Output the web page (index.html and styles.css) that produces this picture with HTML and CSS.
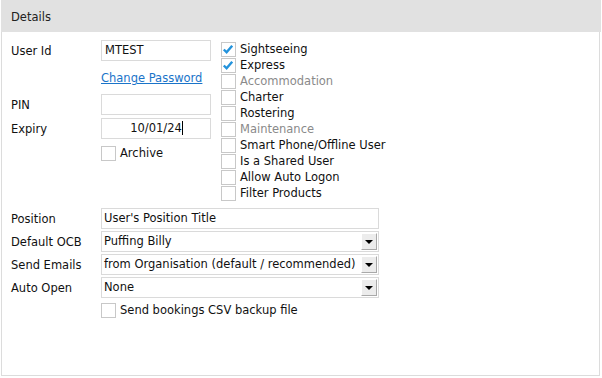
FILE: index.html
```html
<!DOCTYPE html>
<html lang="en">
<head>
  <meta charset="UTF-8" />
  <title>User Details</title>
  <link rel="stylesheet" href="styles.css">
</head>
<body>

  <div class="panel">
    <div class="panel-head">Details</div>

    <div class="panel-body">
      <div class="top">
        <div class="form-left">
          <div class="field">
            <span class="lbl">User Id</span>
            <div class="box">MTEST</div>
          </div>
          <div class="field link-row">
            <span class="lbl"></span>
            <a href="#" class="link">Change Password</a>
          </div>
          <div class="field pin-row">
            <span class="lbl">PIN</span>
            <div class="box"></div>
          </div>
          <div class="field expiry-row">
            <span class="lbl">Expiry</span>
            <div class="box box-center">10/01/24<span class="caret"></span></div>
          </div>
          <div class="field archive-row">
            <span class="lbl"></span>
            <label class="check"><span class="cb"></span>Archive</label>
          </div>
        </div>

        <div class="checks">
          <label class="check"><span class="cb"><svg viewBox="0 0 15 15" width="15" height="15"><path d="M3 7.5 L6 10.5 L12 3.5" fill="none" stroke="#2393dc" stroke-width="2.6"/></svg></span>Sightseeing</label>
          <label class="check"><span class="cb"><svg viewBox="0 0 15 15" width="15" height="15"><path d="M3 7.5 L6 10.5 L12 3.5" fill="none" stroke="#2393dc" stroke-width="2.6"/></svg></span>Express</label>
          <label class="check disabled"><span class="cb"></span>Accommodation</label>
          <label class="check"><span class="cb"></span>Charter</label>
          <label class="check"><span class="cb"></span>Rostering</label>
          <label class="check disabled"><span class="cb"></span>Maintenance</label>
          <label class="check"><span class="cb"></span>Smart Phone/Offline User</label>
          <label class="check"><span class="cb"></span>Is a Shared User</label>
          <label class="check"><span class="cb"></span>Allow Auto Logon</label>
          <label class="check"><span class="cb"></span>Filter Products</label>
        </div>
      </div>

      <div class="rows">
        <div class="field">
          <span class="lbl">Position</span>
          <div class="box wide">User's Position Title</div>
        </div>
        <div class="field">
          <span class="lbl">Default OCB</span>
          <div class="box wide select">Puffing Billy<span class="drop"></span></div>
        </div>
        <div class="field">
          <span class="lbl">Send Emails</span>
          <div class="box wide select">from Organisation (default / recommended)<span class="drop"></span></div>
        </div>
        <div class="field">
          <span class="lbl">Auto Open</span>
          <div class="box wide select">None<span class="drop"></span></div>
        </div>
        <div class="field csv-row">
          <span class="lbl"></span>
          <label class="check"><span class="cb"></span>Send bookings CSV backup file</label>
        </div>
      </div>
    </div>
  </div>

</body>
</html>
```

FILE: styles.css
```css
* {
  box-sizing: border-box;
  margin: 0;
  padding: 0;
}

body {
  font-family: 'DejaVu Sans', Verdana, sans-serif;
  font-size: 11.5px;
  color: #111;
  background: #fff;
}

.panel {
  margin-left: 1px;
  width: 599px;
  height: 376px;
  border: 1px solid #dcdcdc;
  border-top: none;
}

.panel-head {
  height: 32px;
  background-color: #e1e1e1;
  padding-left: 10px;
  line-height: 35px;
  color: #222;
  margin-left: -1px;
  margin-right: -2px;
}

.panel-body {
  padding: 8px 9px;
}

.top {
  display: flex;
  gap: 10px;
}

.form-left {
  width: 200px;
  display: flex;
  flex-direction: column;
}

.field {
  display: flex;
  align-items: center;
}

.lbl {
  width: 90px;
  flex-shrink: 0;
}

.box {
  position: relative;
  width: 110px;
  height: 21px;
  border: 1px solid #dadada;
  padding: 0 3px;
  line-height: 19px;
  white-space: nowrap;
  overflow: hidden;
}

.box-center {
  text-align: center;
  padding-left: 4px;
}

.caret {
  display: inline-block;
  width: 1px;
  height: 14px;
  background: #000;
  vertical-align: -3px;
}

.link-row {
  margin-top: 9px;
  height: 16px;
}

.link {
  color: #1a74c9;
  text-decoration: underline;
}

.pin-row {
  margin-top: 8px;
}

.expiry-row {
  margin-top: 3px;
}

.archive-row {
  margin-top: 6px;
}

.check {
  display: flex;
  align-items: center;
  height: 16px;
  white-space: nowrap;
}

.cb {
  width: 15px;
  height: 15px;
  border: 1px solid #c8c8c8;
  background: #fff;
  margin-right: 4px;
  flex-shrink: 0;
  display: flex;
}

.cb svg {
  display: block;
  margin: -1px 0 0 -1px;
}

.checks {
  display: flex;
  flex-direction: column;
  padding-top: 1px;
}

.check.disabled {
  color: #8a8a8a;
}

.rows {
  margin-top: 7px;
  display: flex;
  flex-direction: column;
  gap: 2px;
}

.box.wide {
  width: 278px;
  padding-left: 2px;
}

.select .drop {
  position: absolute;
  right: 1px;
  top: 1px;
  width: 16px;
  height: 17px;
  background: #ececec;
  border: 1px solid #fff;
  border-right-color: #a9a9a9;
  border-bottom-color: #a9a9a9;
}

.select .drop::after {
  content: '';
  position: absolute;
  left: 3px;
  top: 6px;
  border-left: 4px solid transparent;
  border-right: 4px solid transparent;
  border-top: 4px solid #000;
}

.csv-row {
  margin-top: 2px;
}
```
